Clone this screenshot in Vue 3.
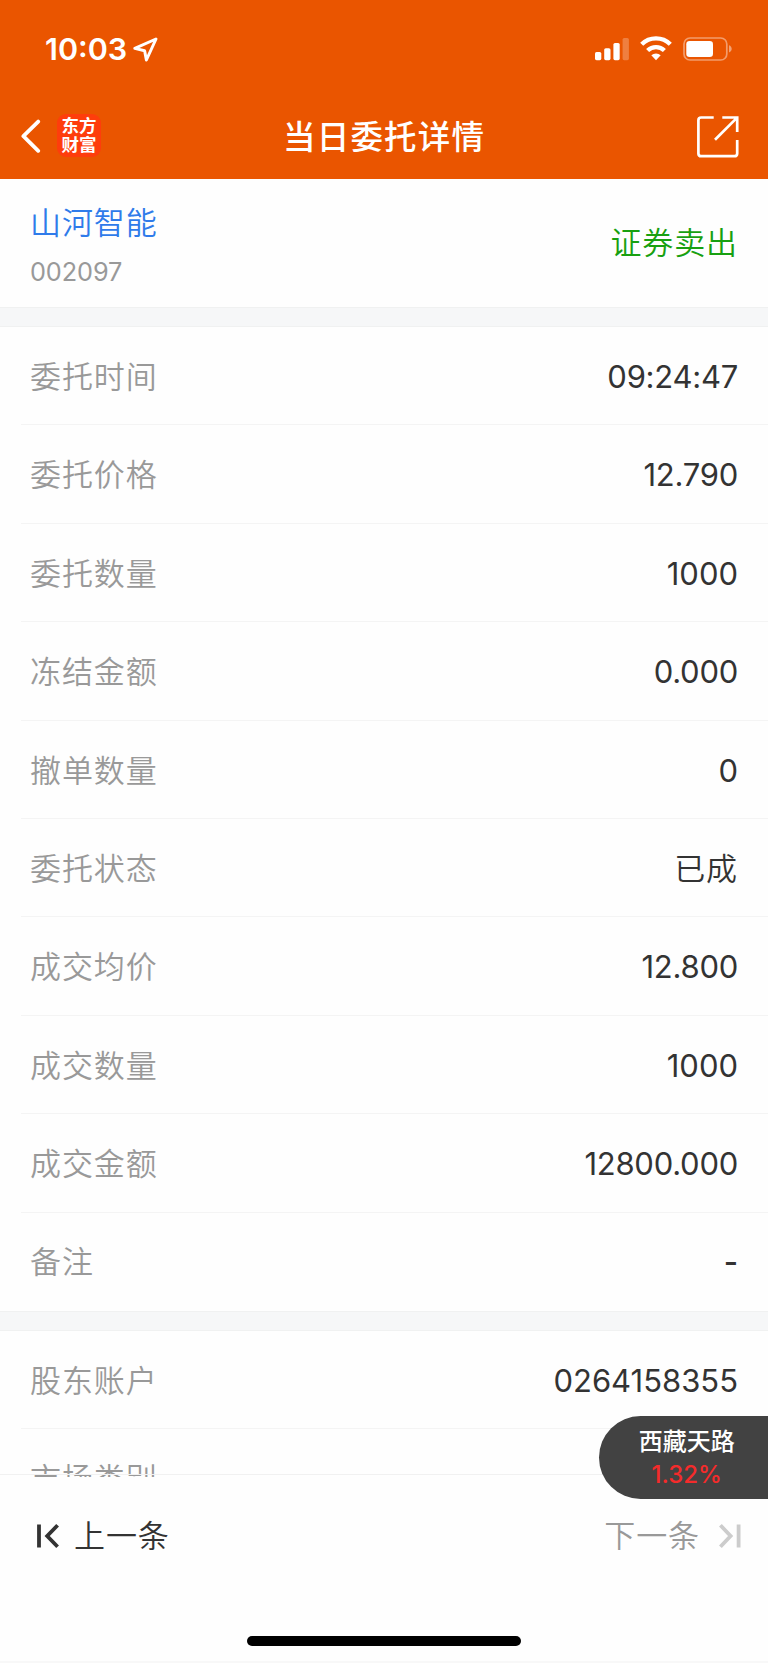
<template>
	<div class="page">
		<header>
			<div class="status">
				<span class="time">10:03</span>
				<svg class="location" width="28" height="28" viewBox="0 0 28 28">
					<path d="M25 4L3.8 13.4L13.6 15.8L15.4 25Z" fill="none" stroke="#fff" stroke-width="3" stroke-linejoin="round" />
				</svg>
				<svg class="signal" width="34" height="24" viewBox="0 0 34 24">
					<rect x="0" y="15" width="6.3" height="8.2" rx="1.6" />
					<rect x="9.2" y="11.2" width="6.3" height="12" rx="1.6" />
					<rect x="18.4" y="6" width="6.3" height="17.2" rx="1.6" />
					<rect x="27.6" y="1" width="6.3" height="22.2" rx="1.6" opacity=".25" />
				</svg>
				<svg class="wifi" width="32" height="24" viewBox="0 0 32 24">
					<path d="M1.7 7.2A20.4 20.4 0 0 1 30.3 7.2" />
					<path d="M7.6 13.5A12.2 12.2 0 0 1 24.4 13.5" />
					<path class="dot" d="M11.3 18.2A7 7 0 0 1 20.7 18.2L16 23.2Z" />
				</svg>
				<svg class="battery" width="50" height="24" viewBox="0 0 50 24">
					<rect x="1" y="1" width="42.8" height="22" rx="6" fill="none" stroke="#fff" stroke-width="1.7" opacity=".42" />
					<rect x="3.3" y="4" width="26.7" height="16" rx="3.3" fill="#fff" />
					<path d="M46 8.3C49.6 9.4 49.6 14.4 46 15.5Z" fill="#fff" opacity=".45" />
				</svg>
			</div>
			<nav>
				<svg class="back" width="22" height="36" viewBox="0 0 22 36">
					<path d="M18.2 2.6L3.4 17.2L18.2 31.8" fill="none" stroke="#fff" stroke-width="3.8" stroke-linecap="round" stroke-linejoin="round" />
				</svg>
				<div class="logo"><span>东方</span><span>财富</span></div>
				<h1>当日委托详情</h1>
				<svg class="share" width="42" height="42" viewBox="0 0 42 42">
					<path d="M16.7 1.5H4.2Q1.4 1.5 1.4 4.3V37.4Q1.4 40.2 4.2 40.2H37.4Q40.2 40.2 40.2 37.4V24M25.3 1.5H40.2V16M39.6 2.1L18 23.8" />
				</svg>
			</nav>
		</header>

		<main>
			<section class="stock">
				<div>
					<div class="name">{{ stock.name }}</div>
					<div class="code">{{ stock.code }}</div>
				</div>
				<div class="side">{{ stock.side }}</div>
			</section>
			<section v-for="(rows, i) in groups" :key="i" class="group">
				<div class="gap"></div>
				<div v-for="row in rows" :key="row.label" class="row">
					<span class="label">{{ row.label }}</span>
					<span class="value" :class="row.type">{{ row.value }}</span>
				</div>
			</section>
		</main>

		<footer>
			<button class="prev">
				<svg width="24" height="26" viewBox="0 0 24 26">
					<path d="M4 1.5V24.5M22.6 2.3L12.2 13L22.6 23.7" />
				</svg>
				<span>上一条</span>
			</button>
			<button class="next">
				<span>下一条</span>
				<svg width="24" height="26" viewBox="0 0 24 26">
					<path d="M1.4 2.3L11.6 13L1.4 23.7M19.6 1.5V24.5" />
				</svg>
			</button>
		</footer>
		<div class="home"></div>

		<div class="float">
			<div class="float-name">西藏天路</div>
			<div class="float-rate">1.32%</div>
		</div>
	</div>
</template>

<script setup>

import { ref } from 'vue'

const stock = ref({ name: '山河智能', code: '002097', side: '证券卖出' })

const groups = ref([
	[
		{ label: '委托时间', value: '09:24:47', type: 'tight' },
		{ label: '委托价格', value: '12.790', type: 'tight' },
		{ label: '委托数量', value: '1000' },
		{ label: '冻结金额', value: '0.000', type: 'tight' },
		{ label: '撤单数量', value: '0' },
		{ label: '委托状态', value: '已成', type: 'han' },
		{ label: '成交均价', value: '12.800', type: 'tight' },
		{ label: '成交数量', value: '1000' },
		{ label: '成交金额', value: '12800.000', type: 'tight' },
		{ label: '备注', value: '-', type: 'none' }
	],
	[
		{ label: '股东账户', value: '0264158355' },
		{ label: '市场类别', value: '' }
	]
])

</script>

<style>
	body {
		margin: 0;
		background: #fefefe;
	}
</style>

<style scoped>
	.page {
		position: relative;
		display: flex;
		flex-direction: column;
		box-sizing: border-box;
		width: 768px;
		height: 1663px;
		overflow: hidden;
		border-bottom: 2px solid #f8f8f8;
		background: #fefefe;
		color: #333;
		font-family: Inter, "Noto Sans CJK SC", sans-serif;
	}
	header {
		flex: none;
		height: 179px;
		background: #ea5500;
		color: #fff;
	}
	.status {
		display: flex;
		align-items: center;
		height: 90px;
		padding: 4px 35px 0 45px;
	}
	.time {
		font-size: 30.5px;
		font-weight: 580;
		width: 86px;
		margin-top: -1px;
	}
	.signal {
		margin-left: auto;
		fill: #fff;
	}
	.wifi {
		margin: 0 11px;
		fill: none;
		stroke: #fff;
		stroke-width: 4.4;
		overflow: visible;
	}
	.wifi .dot {
		fill: #fff;
		stroke: none;
	}
	nav {
		display: flex;
		align-items: center;
		height: 85px;
		padding: 0 29px 0 20px;
	}
	.logo {
		display: flex;
		flex-direction: column;
		justify-content: center;
		align-items: center;
		width: 44px;
		height: 43px;
		margin: 0 0 3px 15px;
		border-radius: 9px;
		background: #fe3d0c;
		font-size: 17.5px;
		font-weight: 700;
		line-height: 19.5px;
	}
	h1 {
		flex: 1;
		margin: 2px 0 0 182px;
		font-size: 32.5px;
		font-weight: 500;
		letter-spacing: 1.2px;
		line-height: 40px;
	}
	.share {
		fill: none;
		stroke: #fff;
		stroke-width: 2.7;
	}
	main {
		flex: none;
		height: 1298px;
		overflow: hidden;
	}
	.stock {
		display: flex;
		justify-content: space-between;
		box-sizing: border-box;
		height: 128px;
		padding: 24px 30px 0;
	}
	.name, .side, .label, .han {
		font-size: 31px;
		font-weight: 350;
		letter-spacing: .9px;
		line-height: 40px;
	}
	.name {
		color: #2f7bea;
	}
	.code {
		margin-top: 13px;
		color: #999;
		font-size: 25.3px;
		letter-spacing: -.1px;
		line-height: 32px;
	}
	.side {
		margin-top: 20px;
		color: #18a010;
	}
	.gap {
		box-sizing: border-box;
		height: 20px;
		border-top: 1px solid #f0f1f1;
		border-bottom: 1px solid #f0f1f1;
		background: #f6f7f8;
	}
	.row {
		display: flex;
		align-items: center;
		justify-content: space-between;
		box-sizing: border-box;
		height: 98.4px;
		margin-left: 21px;
		padding: 1.5px 30px 0 9px;
		border-bottom: 1.5px solid #f4f4f4;
	}
	.row:last-child {
		border-color: transparent;
	}
	.label {
		color: #999;
		padding-top: 1px;
	}
	.value {
		font-size: 31px;
	}
	.value.han {
		padding-top: 1px;
		letter-spacing: .9px;
	}
	.tight {
		letter-spacing: -.25px;
	}
	.none {
		font-weight: 500;
	}
	footer {
		position: relative;
		display: flex;
		justify-content: space-between;
		align-items: center;
		box-sizing: border-box;
		height: 120px;
		margin-top: -3px;
		padding: 2px 26px 0 35px;
		border-top: 1px solid #f1f1f1;
	}
	button {
		display: flex;
		align-items: center;
		padding: 0;
		border: 0;
		background: none;
		color: #333;
		font-family: inherit;
		font-size: 31px;
		font-weight: 350;
		letter-spacing: .9px;
		line-height: 40px;
	}
	button svg {
		fill: none;
		stroke: #333;
		stroke-width: 3.8;
	}
	.prev span {
		margin-left: 15px;
	}
	.next {
		color: #999;
	}
	.next svg {
		margin-left: 19px;
		margin-right: -1px;
		stroke: #ccc;
	}
	.home {
		width: 274px;
		height: 10px;
		margin: 42px auto 0;
		border-radius: 5px;
		background: #000;
	}
	/* floating quote pinned to the right edge */
	.float {
		position: absolute;
		top: 1416px;
		right: 0;
		box-sizing: border-box;
		width: 169.5px;
		height: 83px;
		padding: 9px 0 0 7px;
		border-radius: 42px 0 0 42px;
		background: #424242;
		text-align: center;
	}
	.float-name {
		color: #fff;
		font-size: 24px;
		font-weight: 500;
		line-height: 34px;
	}
	.float-rate {
		color: #f42b2b;
		font-size: 24px;
		font-weight: 550;
		line-height: 32px;
	}
</style>
